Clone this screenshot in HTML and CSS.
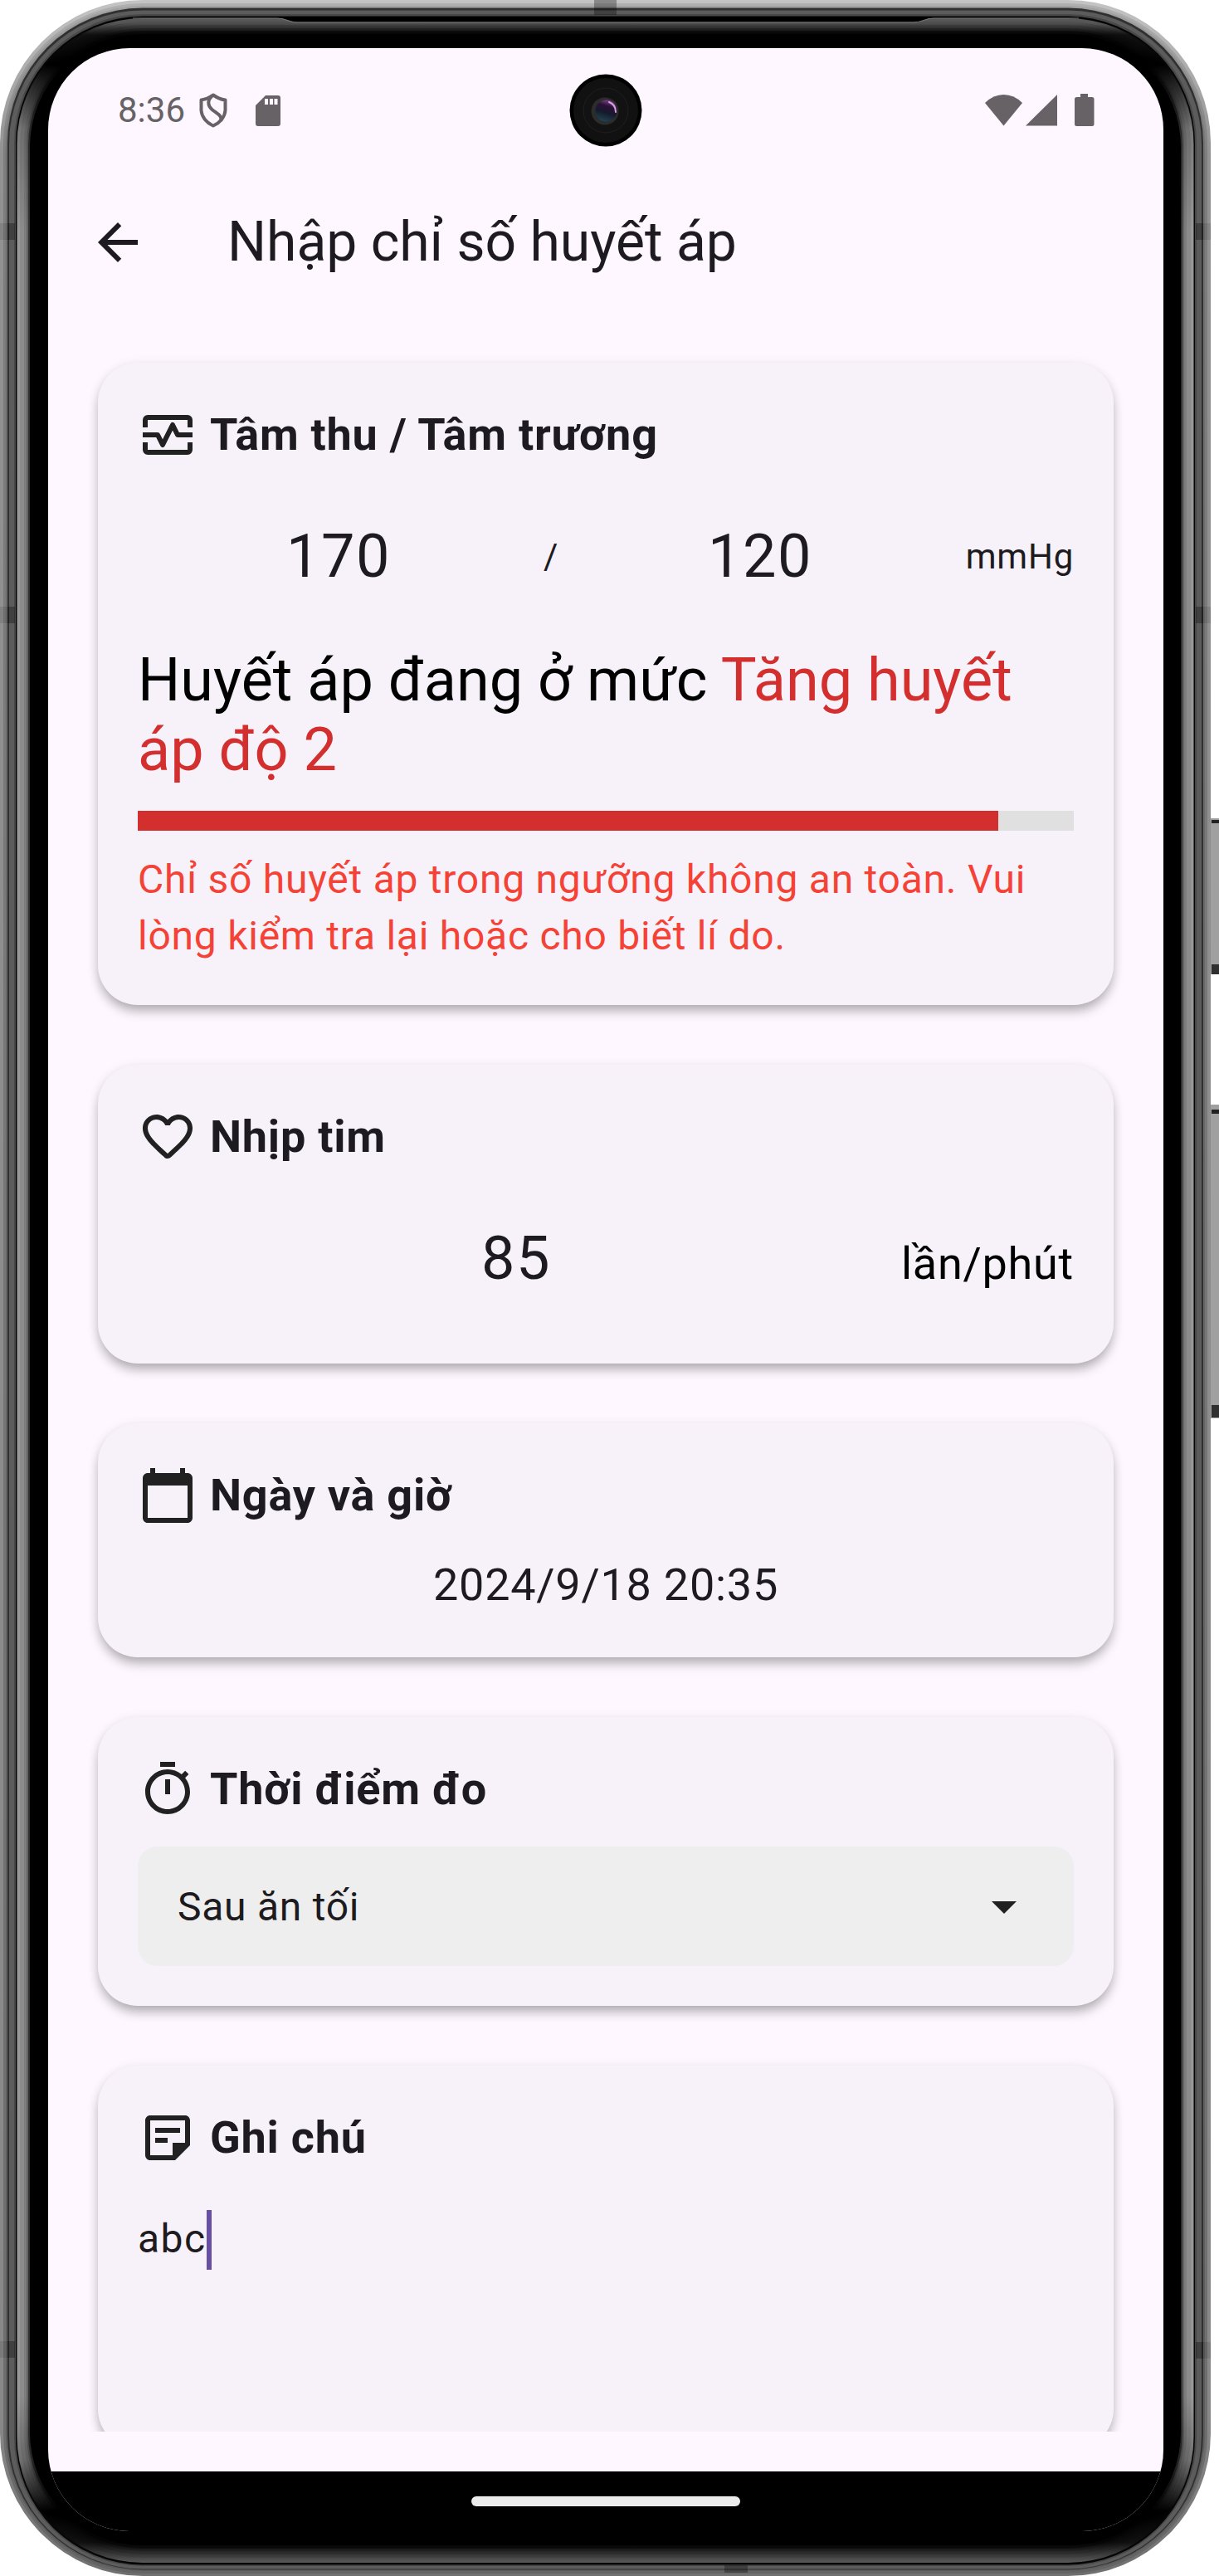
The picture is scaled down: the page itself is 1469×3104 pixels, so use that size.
FILE: index.html
```html
<!DOCTYPE html>
<html lang="vi">
<head>
<meta charset="utf-8">
<title>Nhập chỉ số huyết áp</title>
<link rel="stylesheet" href="styles.css">
</head>
<body>
<div class="device">
  <svg class="frame" width="1469" height="3104" viewBox="0 0 1469 3104" aria-hidden="true">
    <defs>
      <linearGradient id="edge" gradientUnits="userSpaceOnUse" x1="0" y1="0" x2="0" y2="3104">
        <stop offset="0" stop-color="#c4c4c4"/><stop offset=".03" stop-color="#aaa"/><stop offset=".06" stop-color="#929292"/><stop offset=".94" stop-color="#888"/><stop offset="1" stop-color="#707070"/>
      </linearGradient>
      <linearGradient id="edge2" gradientUnits="userSpaceOnUse" x1="0" y1="0" x2="0" y2="3104">
        <stop offset="0" stop-color="#a4a4a4"/><stop offset=".06" stop-color="#707070"/><stop offset="1" stop-color="#5c5c5c"/>
      </linearGradient>
      <linearGradient id="bezel" gradientUnits="userSpaceOnUse" x1="0" y1="0" x2="0" y2="3104">
        <stop offset="0" stop-color="#5a5a5a"/><stop offset=".009" stop-color="#565656"/><stop offset=".0135" stop-color="#111"/><stop offset=".025" stop-color="#000"/><stop offset=".05" stop-color="#777"/><stop offset=".09" stop-color="#989898"/><stop offset=".93" stop-color="#989898"/><stop offset=".955" stop-color="#707070"/><stop offset=".975" stop-color="#000"/><stop offset=".987" stop-color="#111"/><stop offset=".995" stop-color="#5a5a5a"/><stop offset="1" stop-color="#5a5a5a"/>
      </linearGradient>
    </defs>
    <g class="buttons">
      <rect x="1459" y="986" width="10" height="188" fill="#a0a0a0"/>
      <rect x="1460" y="988" width="9" height="4" fill="#222"/>
      <rect x="1460" y="1162" width="9" height="12" fill="#303030"/>
      <rect x="1459" y="1331" width="10" height="378" fill="#a0a0a0"/>
      <rect x="1460" y="1337" width="9" height="5" fill="#222"/>
      <rect x="1460" y="1693" width="9" height="15" fill="#303030"/>
    </g>
    <rect x="0" y="0" width="1459" height="3104" rx="172" fill="url(#edge)"/>
    <rect x="4" y="4" width="1451" height="3097" rx="168" fill="url(#edge2)" opacity=".6"/>
    <rect x="7" y="7" width="1445" height="3091" rx="165" fill="url(#edge2)"/>
    <rect x="9" y="9.500" width="1441" height="3087" rx="163" fill="#303030"/>
    <rect x="11" y="12.500" width="1437" height="3083" rx="161" fill="#5c5c5c"/>
    <rect x="17" y="17" width="1425" height="3075" rx="155" fill="#484848"/>
    <rect x="19" y="19.500" width="1421" height="3071" rx="153" fill="#060606"/>
    <rect x="20.500" y="22" width="1418" height="3066" rx="151.500" fill="url(#bezel)"/>
    <rect x="24" y="26" width="1411" height="3056" rx="148" fill="#000" opacity=".08"/>
    <rect x="29" y="30" width="1401" height="3048" rx="143" fill="#000" opacity=".1"/>
    <rect x="32" y="34" width="1395" height="3040" rx="140" fill="#000" opacity=".2"/>
    <rect x="34" y="37" width="1391" height="3034" rx="138" fill="#000" opacity=".5"/>
    <rect x="36" y="41" width="1387" height="3026" rx="136" fill="#000"/>
    <path d="M334 20H1125L1107 26.500H355L338 21.500z" fill="#000"/>
    <path d="M160 22H334Q340 22 346 24.500Q352 27 358 27H1100Q1107 27 1113 24.500Q1119 22 1125 22H1300" fill="none" stroke="#777" stroke-width="1"/>
    <g fill="#000" opacity=".3">
      <rect x="716" y="0" width="27" height="18"/>
      <rect x="9" y="269" width="9" height="20"/>
      <rect x="9" y="731" width="9" height="20"/>
      <rect x="9" y="2821" width="9" height="20"/>
      <rect x="1441" y="269" width="9" height="20"/>
      <rect x="1441" y="731" width="9" height="20"/>
      <rect x="1441" y="2822" width="9" height="20"/>
      <rect x="873" y="3091" width="28" height="9"/>
    </g>
    <g fill="#000" opacity=".1">
      <rect x="0" y="269" width="9" height="20"/>
      <rect x="0" y="731" width="9" height="20"/>
      <rect x="0" y="2821" width="9" height="20"/>
      <rect x="1450" y="269" width="9" height="20"/>
      <rect x="1450" y="731" width="9" height="20"/>
      <rect x="1450" y="2822" width="9" height="20"/>
    </g>
  </svg>

  <div class="screen">
    <header class="status">
      <span class="clock">8:36</span>
      <svg class="shield" width="34" height="42" viewBox="0 0 34 42" fill="none" stroke="#666266" stroke-width="4" stroke-linejoin="round"><path d="M17 2.500C12 6 7 8 2.500 8.500V21C3 29 9 36 17 39.500C25 36 31 29 31.500 21V8.500C27 8 22 6 17 2.500z"/><path d="M15 4C10 9 10 15 15.500 20C22 25.500 28 27 26 34"/></svg>
      <svg class="sd" width="30" height="37" viewBox="0 0 30 37"><path fill="#666266" fill-rule="evenodd" d="M12 0H27a3 3 0 0 1 3 3V34a3 3 0 0 1-3 3H3a3 3 0 0 1-3-3V12zM11 4V11H15V4zM17 4V11H21V4zM22.500 4V11H26.500V4z"/></svg>
      <svg class="signals" width="132" height="40" viewBox="0 0 132 40" fill="#666266"><path d="M0 11Q10 1 22.500 1T45 11L22.500 38.500z"/><path d="M87 1V38.500H49z"/><path d="M115 0h9v4h5a2.500 2.500 0 0 1 2.500 2.500V36.500a2.500 2.500 0 0 1-2.500 2.500H110.500a2.500 2.500 0 0 1-2.500-2.500V6.500a2.500 2.500 0 0 1 2.500-2.500h4.500z"/></svg>
    </header>
    <div class="appbar">
      <svg class="icon" viewBox="0 0 24 24" fill="#1d1b20"><path d="M20 11H7.830l5.590-5.590L12 4l-8 8 8 8 1.410-1.410L7.830 13H20v-2z"/></svg>
      <h1>Nhập chỉ số huyết áp</h1>
    </div>

    <main class="list">
      <section class="card pressure">
        <div class="head">
          <svg class="icon" viewBox="0 0 24 24" fill="none" stroke="#212121" stroke-width="2"><path d="M3 9V6a1 1 0 0 1 1-1H20a1 1 0 0 1 1 1V9M3 15V18a1 1 0 0 0 1 1H20a1 1 0 0 0 1-1V15"/><path d="M2 12H8L10 16L14 8L16 12H22" stroke-linejoin="round"/></svg>
          <h2>Tâm thu / Tâm trương</h2>
        </div>
        <div class="reading">
          <span class="num">170</span><span class="small">/</span><span class="num">120</span><span class="small unit">mmHg</span>
        </div>
        <p class="level">Huyết áp đang ở mức <span class="danger">Tăng huyết áp độ 2</span></p>
        <div class="bar"><div class="fill" style="width: 91.9%"></div></div>
        <p class="warning">Chỉ số huyết áp trong ngưỡng không an toàn. Vui lòng kiểm tra lại hoặc cho biết lí do.</p>
      </section>

      <section class="card pulse">
        <div class="head">
          <svg class="icon" viewBox="0 0 24 24" fill="#212121"><path d="M19.660 3.990c-2.640-1.800-5.900-.96-7.660 1.100-1.760-2.060-5.020-2.910-7.660-1.100-1.400.96-2.280 2.580-2.340 4.290-.14 3.880 3.300 6.990 8.550 11.760l.1.090c.76.69 1.930.69 2.690-.01l.11-.1c5.250-4.760 8.680-7.870 8.550-11.750-.06-1.700-.94-3.320-2.340-4.280zM12.100 18.550l-.1.1-.1-.1C7.140 14.240 4 11.390 4 8.500 4 6.500 5.500 5 7.500 5c1.540 0 3.040.99 3.570 2.360h1.870C13.460 5.990 14.960 5 16.500 5c2 0 3.500 1.500 3.500 3.500 0 2.890-3.140 5.740-7.900 10.050z"/></svg>
          <h2>Nhịp tim</h2>
        </div>
        <div class="rate"><span class="num">85</span><span class="per">lần/phút</span></div>
      </section>

      <section class="card when">
        <div class="head">
          <svg class="icon" viewBox="0 0 24 24" fill="#212121"><path d="M20 3h-1V1h-2v2H7V1H5v2H4c-1.100 0-2 .9-2 2v16c0 1.100.9 2 2 2h16c1.100 0 2-.9 2-2V5c0-1.100-.9-2-2-2zm0 18H4V8h16v13z"/></svg>
          <h2>Ngày và giờ</h2>
        </div>
        <div class="date">2024/9/18 20:35</div>
      </section>

      <section class="card moment">
        <div class="head">
          <svg class="icon" viewBox="0 0 24 24" fill="#212121"><path d="M15 1H9v2h6V1zm-4 13h2V8h-2v6zm8.030-6.610l1.420-1.420c-.43-.51-.9-.99-1.410-1.410l-1.420 1.420C16.070 4.740 14.120 4 12 4c-4.970 0-9 4.030-9 9s4.020 9 9 9 9-4.030 9-9c0-2.120-.74-4.070-1.970-5.610zM12 20c-3.870 0-7-3.130-7-7s3.130-7 7-7 7 3.130 7 7-3.130 7-7 7z"/></svg>
          <h2>Thời điểm đo</h2>
        </div>
        <div class="select"><span>Sau ăn tối</span><svg class="icon" viewBox="0 0 24 24" fill="#212121"><path d="M7 10l5 5 5-5z"/></svg></div>
      </section>

      <section class="card note">
        <div class="head">
          <svg class="icon" viewBox="0 0 24 24" fill="#212121"><path d="M19 3H4.990C3.890 3 3 3.900 3 5l.01 14c0 1.100.89 2 1.990 2h10l6-6V5c0-1.100-.9-2-2-2zM5 19V5h14v9h-5v5H5zM7 8h10v2H7zM7 12h5v2H7z"/></svg>
          <h2>Ghi chú</h2>
        </div>
        <div class="input"><span>abc</span><i class="caret"></i></div>
      </section>
    </main>
    <footer class="nav"><span class="pill"></span></footer>
  </div>

  <svg class="camera" width="88" height="88" viewBox="0 0 88 88" aria-hidden="true">
    <defs><linearGradient id="lens" x1=".7" y1="0" x2=".4" y2="1"><stop offset="0" stop-color="#8a4a9a"/><stop offset=".3" stop-color="#2a1035"/><stop offset=".6" stop-color="#151a2c"/><stop offset="1" stop-color="#1f4452"/></linearGradient></defs>
    <circle cx="44" cy="44" r="43.500" fill="#000"/>
    <circle cx="44" cy="44" r="39" fill="#111"/>
    <circle cx="44" cy="44" r="27" fill="#121212" stroke="#1f1f1f"/>
    <circle cx="43" cy="45" r="16.500" fill="#2c2c2c"/>
    <circle cx="44.500" cy="44.500" r="13" fill="url(#lens)"/>
    <path d="M48 34Q56 37 56 46" fill="none" stroke="#d9a0e8" stroke-width="2" stroke-linecap="round"/>
  </svg>
</div>
</body>
</html>
```
FILE: styles.css
```css
* { box-sizing: border-box; margin: 0; padding: 0; }
body { background: #fff; font-family: Roboto, "Noto Sans", sans-serif; color: #1d1b20; }
h1, h2, p { font-weight: 400; }
.device { position: relative; width: 1469px; height: 3104px; padding: 58px 67px 54px 58px; overflow: hidden; }
.frame { position: absolute; left: 0; top: 0; }
.camera { position: absolute; left: 686px; top: 89px; }
.screen { position: relative; height: 2992px; border-radius: 98px; overflow: hidden; background: #fef7ff; display: flex; flex-direction: column; }
.icon { width: 72px; height: 72px; flex: none; display: block; }

.status { height: 150px; flex: none; display: flex; align-items: center; padding: 0 83px 0 84px; color: #666266; }
.clock { font-size: 42px; width: 98px; line-height: 50px; }
.sd { margin-left: 34px; }
.signals { margin-left: auto; }
.appbar { height: 168px; flex: none; display: flex; align-items: center; padding-left: 48px; gap: 96px; }
.appbar h1 { font-size: 66px; line-height: 84px; }

.list { height: 2554px; flex: none; overflow: hidden; padding: 61px 60px 0; display: flex; flex-direction: column; gap: 72px; }
.card { flex: none; padding: 48px; border-radius: 48px; background: #f7f2fa; box-shadow: 0 9px 14px -2px rgba(0,0,0,.28), 0 2px 14px rgba(0,0,0,.08); }
.pressure { height: 774px; }
.pulse { height: 360px; }
.when { height: 282px; }
.moment { height: 348px; }
.note { height: 462px; }
.head { display: flex; align-items: center; gap: 15px; height: 78px; }
.head h2 { font-size: 54px; font-weight: 700; line-height: 78px; letter-spacing: .75px; }

.reading { display: grid; grid-template-columns: 484px 28px 476px 1fr; align-items: center; height: 144px; margin-top: 35px; }
.num { font-size: 72px; letter-spacing: 1.5px; text-align: center; }
.small { font-size: 42px; letter-spacing: .75px; text-align: center; }
.unit { text-align: right; }
.level { font-size: 72px; line-height: 84.4px; color: #000; margin-top: 36px; }
.danger { color: #d32f2f; }
.bar { height: 24px; background: #e0e0e0; margin-top: 30px; }
.fill { height: 24px; background: #d32f2f; }
.warning { font-size: 48px; line-height: 68.64px; letter-spacing: .75px; color: #f44336; margin-top: 25px; }

.rate { display: flex; align-items: center; gap: 8px; height: 144px; margin-top: 35px; }
.rate .num { flex: 1; }
.per { font-size: 54px; letter-spacing: .75px; color: #000; padding-top: 13px; }
.date { font-size: 54px; line-height: 72px; letter-spacing: .75px; text-align: center; margin-top: 33px; }
.select { height: 144px; margin-top: 30px; padding: 0 48px; border-radius: 24px; background: #eee; display: flex; align-items: center; justify-content: space-between; font-size: 48px; letter-spacing: .75px; }
.input { display: flex; align-items: center; height: 72px; margin-top: 48px; font-size: 48px; letter-spacing: 1.5px; }
.input span { padding-bottom: 4px; }
.caret { width: 6px; height: 72px; background: #6750a4; }

.nav { height: 72px; margin-top: auto; flex: none; background: #000; display: flex; justify-content: center; padding-top: 30px; }
.pill { width: 324px; height: 12px; border-radius: 6px; background: #ececec; }
```
